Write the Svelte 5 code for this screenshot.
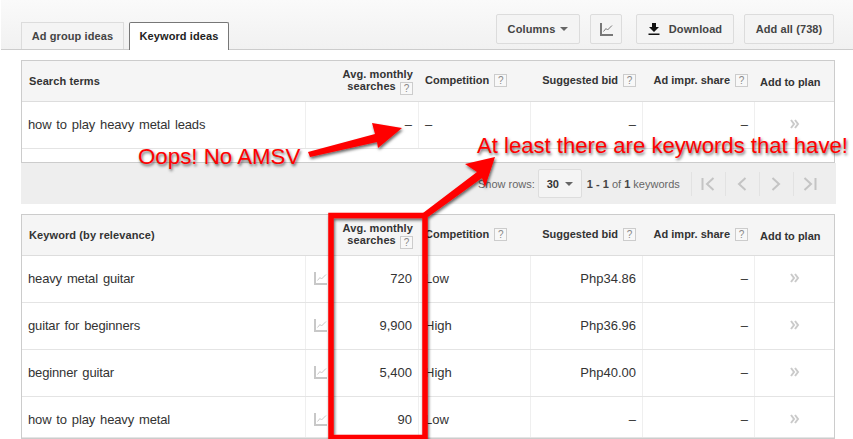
<script>
  const cols = ['Competition', 'Suggested bid', 'Ad impr. share'];
  const rows = [
    { k: 'heavy metal guitar', a: '720', c: 'Low', b: 'Php34.86' },
    { k: 'guitar for beginners', a: '9,900', c: 'High', b: 'Php36.96' },
    { k: 'beginner guitar', a: '5,400', c: 'High', b: 'Php40.00' },
    { k: 'how to play heavy metal', a: '90', c: 'Low', b: '–' }
  ];
</script>

{#snippet trend(cls)}
  <svg class={cls} width="13" height="13" viewBox="0 0 13 13" fill="none">
    <path d="M1 0V12H13" stroke="currentColor" stroke-width="2" />
    <path d="M3.5 8.5L6 5.5L7.5 7L12 2.5" stroke="currentColor" stroke-width="1" />
  </svg>
{/snippet}

{#snippet chevrons()}
  <svg class="chev" width="10" height="10" viewBox="0 0 10 10" fill="none">
    <path d="M1 1L4 5L1 9M5 1L8 5L5 9" stroke="#cacaca" stroke-width="2" />
  </svg>
{/snippet}

{#snippet head(first)}
  <div class="row header">
    <div class="cell first">{first}</div>
    <div class="cell avg">
      <span class="two">Avg. monthly<br />searches <i class="q">?</i></span>
    </div>
    {#each cols as c, i}
      <div class="cell hcol" class:left={i === 0}>{c} <i class="q">?</i></div>
    {/each}
    <div class="cell plan">Add to plan</div>
  </div>
{/snippet}

<div class="page">
  <header class="top">
    <nav class="tabs">
      <div class="tab">Ad group ideas</div>
      <div class="tab on">Keyword ideas</div>
    </nav>
    <div class="tools">
      <button class="btn cols">Columns <span class="caret"></span></button>
      <button class="btn chart">{@render trend('t-dark')}</button>
      <button class="btn dl">
        <svg width="12" height="12" viewBox="0 0 12 12"><path d="M4 0H8V4H11L6 9L1 4H4ZM0.5 10.5H11.5V12H0.5Z" fill="#111" /></svg>
        Download
      </button>
      <button class="btn add">Add all (738)</button>
    </div>
  </header>

  <section class="table">
    {@render head('Search terms')}
    <div class="row body">
      <div class="cell first">how to play heavy metal leads</div>
      <div class="cell num">–</div>
      <div class="cell">–</div>
      <div class="cell num">–</div>
      <div class="cell num">–</div>
      <div class="cell ctr">{@render chevrons()}</div>
    </div>
    <div class="spacer"></div>
  </section>

  <div class="pager">
    <span class="show">Show rows:</span>
    <span class="select">30 <span class="caret"></span></span>
    <span class="count"><b>1 - 1</b> of <b>1</b> keywords</span>
    <div class="nav">
      <span><svg width="14" height="14" viewBox="0 0 14 14" fill="none"><path d="M1.5 1V13M12.5 1L6 7L12.5 13" stroke="#c4c4c4" stroke-width="2" /></svg></span>
      <span><svg width="10" height="14" viewBox="0 0 10 14" fill="none"><path d="M8.5 1L2 7L8.5 13" stroke="#c4c4c4" stroke-width="2" /></svg></span>
      <span><svg width="10" height="14" viewBox="0 0 10 14" fill="none"><path d="M1.5 1L8 7L1.5 13" stroke="#c4c4c4" stroke-width="2" /></svg></span>
      <span><svg width="14" height="14" viewBox="0 0 14 14" fill="none"><path d="M12.5 1V13M1.5 1L8 7L1.5 13" stroke="#c4c4c4" stroke-width="2" /></svg></span>
    </div>
  </div>

  <section class="table second">
    {@render head('Keyword (by relevance)')}
    {#each rows as r}
      <div class="row body">
        <div class="cell first">{r.k}</div>
        <div class="cell num withicon">{@render trend('t-light')}<span>{r.a}</span></div>
        <div class="cell">{r.c}</div>
        <div class="cell num">{r.b}</div>
        <div class="cell num">–</div>
        <div class="cell ctr">{@render chevrons()}</div>
      </div>
    {/each}
  </section>

  <svg class="marks" width="853" height="439" viewBox="0 0 853 439">
    <defs>
      <filter id="sh" x="-10%" y="-10%" width="120%" height="120%">
        <feDropShadow dx="1" dy="2" stdDeviation="1.6" flood-color="#000" flood-opacity="0.6" />
      </filter>
    </defs>
    <g filter="url(#sh)" fill="#f00">
      <path d="M308 152L375 134L372 123L402 128L378 148L377 142L310 157Z" />
      <path d="M423 213L477 172L465 164L495 157L485 187L482 178L428 217Z" />
      <rect x="331" y="215.5" width="94" height="222" fill="none" stroke="#f00" stroke-width="5.5" />
    </g>
  </svg>
  <div class="note n1">Oops! No AMSV</div>
  <div class="note n2">At least there are keywords that have!</div>
</div>

<style>
  :global(body) {
    margin: 0;
    background: #fff;
  }
  .page {
    position: relative;
    width: 853px;
    height: 439px;
    overflow: hidden;
    font-family: "Liberation Sans", Arial, sans-serif;
    color: #333;
    font-size: 12px;
  }
  .top {
    box-sizing: border-box;
    height: 50px;
    margin-left: 1px;
    border-bottom: 1px solid #ccc;
    background: linear-gradient(#fafafa, #f1f1f1);
    display: flex;
    justify-content: space-between;
    padding: 14px 19px 0 20px;
  }
  .tabs {
    display: flex;
    gap: 5px;
    margin-top: 8px;
    height: 28px;
  }
  .tab {
    box-sizing: border-box;
    width: 103px;
    height: 27px;
    border: 1px solid #dcdcdc;
    border-bottom: 0;
    background: #f4f4f4;
    text-align: center;
    line-height: 27px;
    font-size: 11px;
    font-weight: bold;
    letter-spacing: 0.1px;
    color: #444;
  }
  .tab.on {
    width: 100px;
    height: 28px;
    background: #fff;
    border-color: #777 #777 #fff;
    border-radius: 2px 2px 0 0;
    color: #222;
  }
  .tools {
    display: flex;
    height: 30px;
  }
  .btn {
    box-sizing: border-box;
    height: 30px;
    border: 1px solid #dcdcdc;
    border-radius: 2px;
    background: #f4f4f4;
    font: bold 11px "Liberation Sans", Arial, sans-serif;
    letter-spacing: 0.1px;
    color: #444;
    padding: 0;
    display: flex;
    align-items: center;
    justify-content: center;
  }
  .cols { width: 84px; gap: 5px; }
  .chart { width: 32px; margin-left: 10px; }
  .dl { width: 98px; margin-left: 14px; gap: 9px; }
  .add { width: 90px; margin-left: 10px; }
  .caret {
    display: inline-block;
    width: 0;
    height: 0;
    border: 4px solid transparent;
    border-top: 4px solid #666;
    border-bottom: 0;
  }
  .t-dark { color: #777; }
  .t-light { color: #c8c8c8; }
  .table {
    box-sizing: border-box;
    width: 814px;
    margin: 10px 0 0 21px;
    border: 1px solid #ccc;
  }
  .row {
    display: grid;
    grid-template-columns: 283px 113px 112px 112px 112px 80px;
  }
  .header {
    height: 40px;
    background: #f5f5f5;
    border-bottom: 1px solid #ddd;
    font-size: 11px;
    font-weight: bold;
  }
  .body {
    height: 46px;
    border-bottom: 1px solid #e4e4e4;
    font-size: 13px;
    color: #333;
  }
  .body:last-child { height: 40px; }
  .cell {
    box-sizing: border-box;
    display: flex;
    align-items: center;
    padding: 0 6px;
  }
  .body .cell { padding-bottom: 2px; }
  .body:last-child .cell { padding-top: 4px; padding-bottom: 0; }
  .body .cell + .cell { border-left: 1px solid #efefef; }
  .body .first { word-spacing: 1.5px; letter-spacing: -0.15px; }
  .header .first { padding-left: 7px; letter-spacing: 0.1px; }
  .avg, .hcol, .num { justify-content: flex-end; }
  .hcol.left { justify-content: flex-start; padding-left: 7px; }
  .hcol { gap: 4px; white-space: nowrap; padding-bottom: 2px; }
  .two { text-align: right; line-height: 12px; letter-spacing: 0.1px; }
  .avg { padding-right: 5px; }
  .plan { justify-content: flex-start; padding: 1px 0 0 6px; }
  .ctr { justify-content: center; }
  .withicon { justify-content: space-between; padding-left: 8px; }
  .q {
    display: inline-block;
    box-sizing: border-box;
    width: 13px;
    height: 13px;
    margin-left: 1px;
    border: 1px solid #ccc;
    background: #f8f8f8;
    font-style: normal;
    font-weight: normal;
    font-size: 10px;
    line-height: 11px;
    text-align: center;
    letter-spacing: 0;
    color: #888;
    vertical-align: -2px;
  }
  .spacer { height: 13px; }
  .pager {
    box-sizing: border-box;
    width: 815px;
    height: 41px;
    margin-left: 21px;
    background: #eee;
    display: flex;
    align-items: center;
    padding-left: 457px;
    color: #666;
    font-size: 11px;
  }
  .select {
    box-sizing: border-box;
    width: 44px;
    height: 29px;
    margin-left: 3px;
    border: 1px solid #ddd;
    border-radius: 2px;
    background: #f4f4f4;
    color: #333;
    display: flex;
    align-items: center;
    justify-content: center;
    gap: 6px;
    font-size: 11px;
    font-weight: bold;
  }
  .count { margin-left: 5px; width: 104px; white-space: nowrap; }
  .count b { color: #444; }
  .nav { display: flex; height: 24px; }
  .nav span {
    box-sizing: border-box;
    width: 34px;
    border-left: 1px solid #e2e2e2;
    display: flex;
    align-items: center;
    justify-content: center;
  }
  .second { margin-top: 10px; }
  .marks {
    position: absolute;
    left: 0;
    top: 0;
    pointer-events: none;
  }
  .note {
    position: absolute;
    color: #f00;
    white-space: nowrap;
    text-shadow: 1px 2px 3px rgba(0, 0, 0, 0.6);
  }
  .n1 { left: 138px; top: 144px; font-size: 22.3px; }
  .n2 { left: 477px; top: 133px; font-size: 22.1px; }
</style>
